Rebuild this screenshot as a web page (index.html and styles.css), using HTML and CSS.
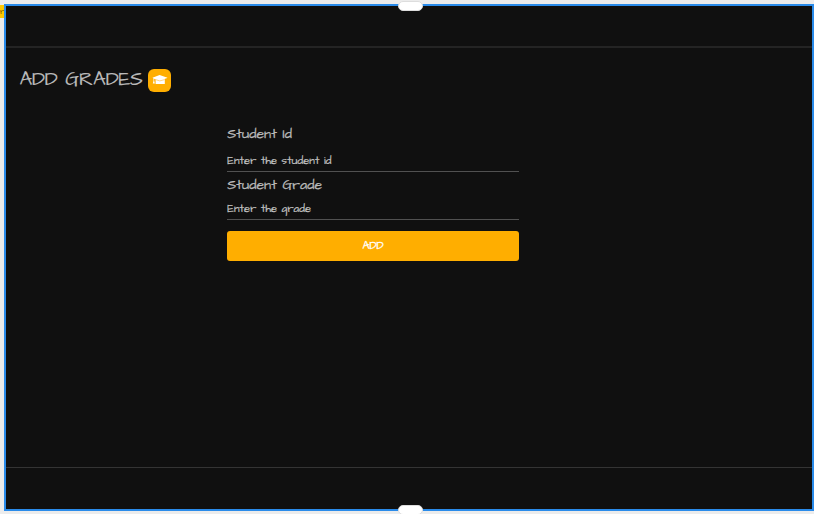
FILE: index.html
```
<!DOCTYPE html>
<html lang="en">
<head>
<meta charset="utf-8">
<title>Add grades</title>
<link rel="stylesheet" href="styles.css">
</head>
<body>
<span class="tag">r</span>
<div class="frame">
  <span class="handle handle-top"></span>
  <header class="topbar"></header>
  <main class="content">
    <h1 class="title"><span class="title-text">ADD GRADES</span>
      <span class="cap"><svg viewBox="0 0 16 14" width="16" height="14"><path fill="#fff" d="M7.6 2 15.5 4.7 14 5.5 12.8 5.8V11H3.6V6.2L2.2 5.8V7.7L2.9 10.6H.8L1.5 7.7V5.4L.5 4.8Z"/><path fill="none" stroke="#fdb93a" stroke-width=".6" d="M3.5 6.6 7.8 7.9 12.8 6.6"/></svg></span>
    </h1>
    <form class="form">
      <label class="label label-id" for="sid">Student Id</label>
      <input class="field field-id" id="sid" placeholder="Enter the student id">
      <label class="label label-grade" for="grade">Student Grade</label>
      <input class="field field-grade" id="grade" placeholder="Enter the grade">
      <button class="add" type="button">ADD</button>
    </form>
  </main>
  <footer class="bottombar"></footer>
  <span class="handle handle-bottom"></span>
</div>
</body>
</html>
```
FILE: styles.css
```
* { box-sizing: border-box; }
body {
  margin: 0;
  height: 514px;
  padding: 4px 0 3px 4px;
  background: #ececec;
  overflow: hidden;
  font-family: "Architects Daughter", Lato, sans-serif;
  color: #bababa;
}
.frame {
  position: relative;
  height: 507px;
  border: 2px solid #2a8bea;
  background: #101010;
  display: flex;
  flex-direction: column;
}
.topbar { height: 42px; border-bottom: 2px solid #242424; flex: none; }
.bottombar { height: 42px; border-top: 1px solid #343434; flex: none; }
.content { flex: 1; padding: 19px 13.4px 0; }
.title {
  margin: 0;
  height: 24px;
  display: flex;
  align-items: center;
  font-size: 20px;
  font-weight: 400;
  line-height: 24px;
}
.title-text {
  width: 129px;
  white-space: nowrap;
  letter-spacing: -0.2px;
  -webkit-text-stroke: 0.1px currentColor;
}
.cap {
  width: 23px;
  height: 23px;
  margin-top: 2px;
  border-radius: 6px;
  background: #ffae00;
  display: flex;
  align-items: center;
  justify-content: center;
}
.form {
  width: 291.6px;
  margin: 34px 0 0 207.9px;
  display: flex;
  flex-direction: column;
}
.label {
  font-size: 14px;
  line-height: 18px;
  white-space: nowrap;
  letter-spacing: 0.06px;
  -webkit-text-stroke: 0.25px currentColor;
}
.label-grade { margin-top: 4px; }
.field {
  width: 100%;
  border: 0;
  border-bottom: 1px solid #515151;
  border-radius: 0;
  padding: 0 0 3px;
  background: transparent;
  color: inherit;
  font: 11px/16px "Architects Daughter", Lato, sans-serif;
  letter-spacing: 0.12px;
  -webkit-text-stroke: 0.22px currentColor;
  outline: 0;
}
.field::placeholder { color: #c2c2c2; opacity: 1; }
.field-id { height: 20px; margin-top: 9px; }
.field-grade { height: 20px; margin-top: 6px; }
.add {
  height: 30px;
  margin-top: 11px;
  padding: 0 0 1px;
  border: 0;
  border-radius: 3px;
  background: #ffae00;
  color: #fff;
  font: 11px/16px "Architects Daughter", Lato, sans-serif;
  -webkit-text-stroke: 0.3px currentColor;
}
.tag {
  position: absolute;
  left: 0;
  top: 5px;
  width: 4px;
  height: 13px;
  overflow: hidden;
  background: #ffc800;
  color: #7b5c00;
  font-size: 9px;
  line-height: 13px;
}
.handle {
  position: absolute;
  left: 392px;
  width: 25px;
  height: 10px;
  border: 1px solid #ddd;
  border-radius: 5px;
  background: #fff;
}
.handle-top { top: -5px; }
.handle-bottom { bottom: -6px; }
```
